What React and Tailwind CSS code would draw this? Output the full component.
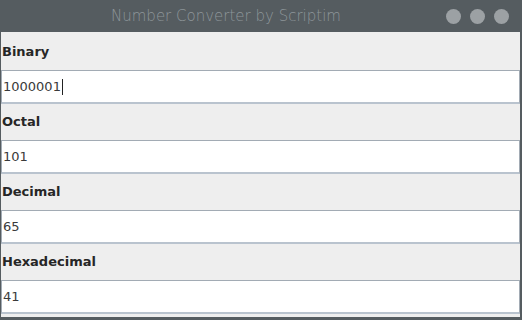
import React from 'react';

const fields = [
    {label: "Binary", value: "1000001", focused: true},
    {label: "Octal", value: "101"},
    {label: "Decimal", value: "65"},
    {label: "Hexadecimal", value: "41"},
];

const Field = ({label, value, focused}) => {
    return (
        <div className="flex flex-col">
            <div className="h-[36px] flex items-center pl-[1px] text-[13px] font-bold text-[#262626]">
                {label}
            </div>
            <div className="h-[34px] bg-white border border-[#a2abb4] border-b-[2px] border-b-[#b9c3ce] flex items-center pl-[1px] text-[13px] text-[#3a3a3a]">
                <span>{value}</span>
                {focused && <span className="block w-px h-[16px] bg-[#222222] ml-[1px]"></span>}
            </div>
        </div>
    );
}

const App = () => {
    return (
        <div className="w-[522px] h-[320px] bg-[#555c60] flex flex-col font-['DejaVu_Sans',sans-serif]">
            <div className="h-[32px] flex items-center relative">
                <div className="w-full text-center pr-[70px] text-[15px] text-[#8e969a] font-light font-['DejaVu_Sans',sans-serif]">
                    Number Converter by Scriptim
                </div>
                <div className="absolute right-[13px] top-[9px] flex gap-[9px]">
                    <span className="block w-[15px] h-[15px] rounded-full bg-[#9ca1a4]"></span>
                    <span className="block w-[15px] h-[15px] rounded-full bg-[#9ca1a4]"></span>
                    <span className="block w-[15px] h-[15px] rounded-full bg-[#9ca1a4]"></span>
                </div>
            </div>
            <div className="flex-1 bg-[#eeeeee] ml-[1px] mr-[2px] mb-[3px] pt-[2px] flex flex-col">
                {fields.map((f) => (
                    <Field key={f.label} {...f} />
                ))}
            </div>
        </div>
    );
}

export default App;
